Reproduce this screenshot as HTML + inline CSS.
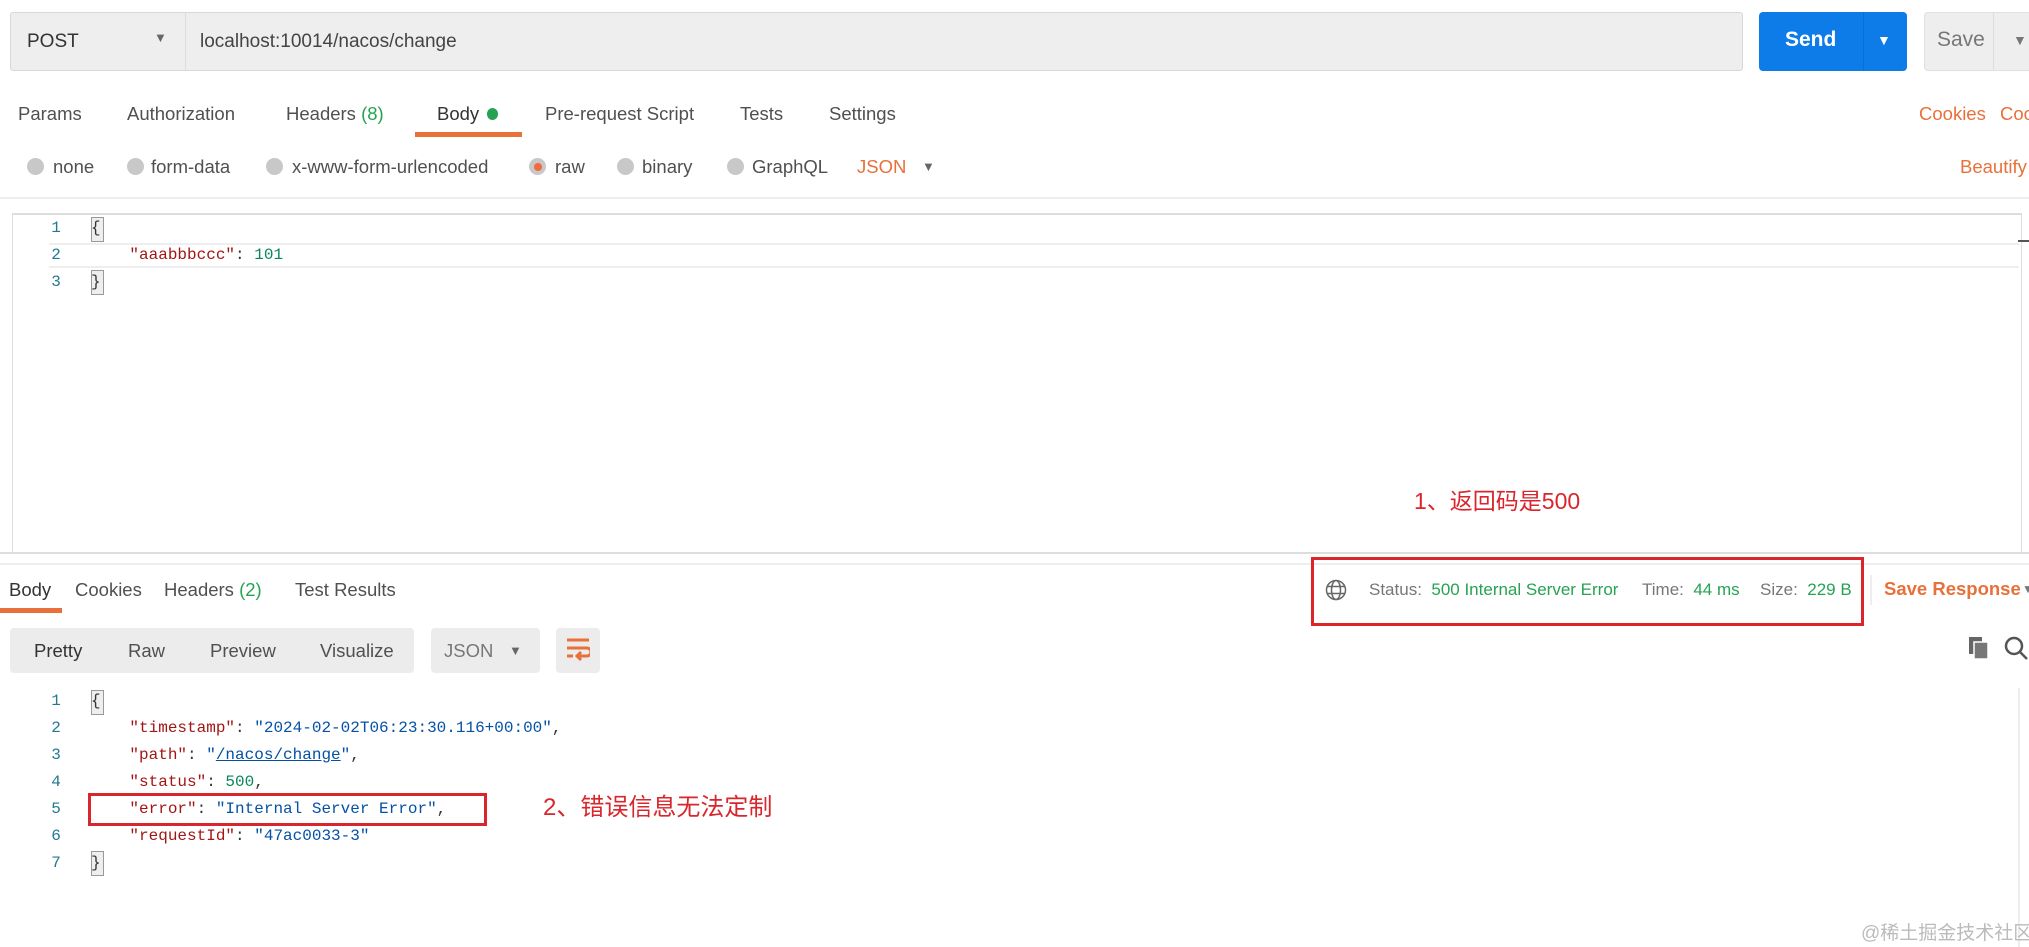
<!DOCTYPE html>
<html><head><meta charset="utf-8"><style>
*{margin:0;padding:0;box-sizing:border-box}
body{width:2029px;height:947px;background:#fff;position:relative;overflow:hidden;font-family:"Liberation Sans","Noto Sans CJK SC",sans-serif;color:#505050}
.a{position:absolute;white-space:nowrap}
.t{font-size:18.5px;line-height:24px;color:#505050}
.mono{font-family:"Liberation Mono",monospace;font-size:16px;line-height:27px}
.ln{color:#237893;width:20px;text-align:center}
.k{color:#a31515}.s{color:#0451a5}.n{color:#098658}.p{color:#333}
.rad{position:absolute;width:17px;height:17px;border-radius:50%;background:#c8c8c8}
.or{color:#e8703a}.gr{color:#26a352}
.bb{position:absolute;width:13px;height:25px;border:1px solid #999;background:#eee}
</style></head><body>
<div class="a" style="left:10px;top:12px;width:1733px;height:59px;background:#eee;border:1px solid #d8d8d8;border-radius:3px"></div>
<div class="a" style="left:185px;top:13px;width:1px;height:57px;background:#ddd"></div>
<div class="a" style="left:27px;top:30px;font-size:19px;line-height:24px;color:#333">POST</div>
<div class="a" style="left:154px;top:30px;font-size:13px;color:#666">▼</div>
<div class="a" style="left:200px;top:30px;font-size:19px;line-height:24px;color:#444">localhost:10014/nacos/change</div>
<div class="a" style="left:1759px;top:12px;width:148px;height:59px;background:#0d7ce8;border-radius:4px"></div>
<div class="a" style="left:1863px;top:12px;width:1px;height:59px;background:#0a6fd2"></div>
<div class="a" style="left:1785px;top:28px;font-size:21px;font-weight:bold;color:#fff">Send</div>
<div class="a" style="left:1877px;top:32px;font-size:14px;color:#fff">▼</div>
<div class="a" style="left:1924px;top:12px;width:110px;height:59px;background:#eee;border:1px solid #e0e0e0;border-radius:4px"></div>
<div class="a" style="left:1993px;top:13px;width:1px;height:57px;background:#ddd"></div>
<div class="a" style="left:1937px;top:28px;font-size:21px;color:#777">Save</div>
<div class="a" style="left:2013px;top:32px;font-size:14px;color:#777">▼</div>
<div class="a t" style="left:18px;top:102px">Params</div>
<div class="a t" style="left:127px;top:102px">Authorization</div>
<div class="a t" style="left:286px;top:102px">Headers <span class="gr">(8)</span></div>
<div class="a t" style="left:437px;top:102px;color:#333">Body</div>
<div class="a" style="left:487px;top:108px;width:11px;height:12px;border-radius:50%;background:#26a352"></div>
<div class="a" style="left:415px;top:132px;width:107px;height:5px;background:#e8703a"></div>
<div class="a t" style="left:545px;top:102px">Pre-request Script</div>
<div class="a t" style="left:740px;top:102px">Tests</div>
<div class="a t" style="left:829px;top:102px">Settings</div>
<div class="a t or" style="left:1919px;top:102px">Cookies</div>
<div class="a t or" style="left:2000px;top:102px">Cookies</div>
<div class="rad" style="left:27px;top:158px"></div><div class="a t" style="left:53px;top:155px">none</div>
<div class="rad" style="left:127px;top:158px"></div><div class="a t" style="left:151px;top:155px">form-data</div>
<div class="rad" style="left:266px;top:158px"></div><div class="a t" style="left:292px;top:155px">x-www-form-urlencoded</div>
<div class="rad" style="left:529px;top:158px"></div><div class="a" style="left:534px;top:163px;width:8px;height:8px;border-radius:50%;background:#f26b3a"></div><div class="a t" style="left:555px;top:155px">raw</div>
<div class="rad" style="left:617px;top:158px"></div><div class="a t" style="left:642px;top:155px">binary</div>
<div class="rad" style="left:727px;top:158px"></div><div class="a t" style="left:752px;top:155px">GraphQL</div>
<div class="a t or" style="left:857px;top:155px">JSON</div>
<div class="a" style="left:922px;top:159px;font-size:13px;color:#666">▼</div>
<div class="a t or" style="left:1960px;top:155px">Beautify</div>
<div class="a" style="left:0;top:197px;width:2029px;height:2px;background:#eee"></div>
<div class="a" style="left:12px;top:213px;width:2010px;height:340px;border-top:2px solid #ddd;border-left:1px solid #ddd;border-right:1px solid #ddd"></div>
<div class="a" style="left:49px;top:243px;width:1970px;height:25px;border-top:2px solid #eee;border-bottom:2px solid #eee"></div>
<div class="bb" style="left:91px;top:217px"></div>
<div class="bb" style="left:91px;top:270px"></div>
<div class="a" style="left:2018px;top:240px;width:11px;height:2px;background:#555"></div>
<div class="a mono" style="left:46px;top:215px">
<div class="ln">1</div><div class="ln">2</div><div class="ln">3</div></div>
<div class="a mono p" style="left:91px;top:215px">{<br>&nbsp;&nbsp;&nbsp;&nbsp;<span class="k">"aaabbbccc"</span>: <span class="n">101</span><br>}</div>
<div class="a" style="left:1414px;top:482px;font-size:23px;color:#d9262c">1、返回码是500</div>
<div class="a" style="left:0;top:552px;width:2029px;height:2px;background:#ddd"></div>
<div class="a" style="left:0;top:563px;width:2029px;height:2px;background:#eee"></div>
<div class="a t" style="left:9px;top:578px;color:#333">Body</div>
<div class="a t" style="left:75px;top:578px">Cookies</div>
<div class="a t" style="left:164px;top:578px">Headers <span class="gr">(2)</span></div>
<div class="a t" style="left:295px;top:578px">Test Results</div>
<div class="a" style="left:0;top:608px;width:62px;height:5px;background:#e8703a"></div>
<div class="a" style="left:1311px;top:557px;width:553px;height:69px;border:3px solid #d9262c"></div>
<svg class="a" style="left:1325px;top:579px" width="22" height="22" viewBox="0 0 22 22" fill="none" stroke="#666" stroke-width="1.5"><circle cx="11" cy="11" r="9.5"/><ellipse cx="11" cy="11" rx="4.5" ry="9.5"/><path d="M2 7.5h18M2 14.5h18"/></svg>
<div class="a" style="left:1369px;top:579px;font-size:17px;line-height:22px"><span style="color:#777">Status:</span>&nbsp; <span class="gr">500 Internal Server Error</span></div>
<div class="a" style="left:1642px;top:579px;font-size:17px;line-height:22px"><span style="color:#777">Time:</span>&nbsp; <span class="gr">44 ms</span></div>
<div class="a" style="left:1760px;top:579px;font-size:17px;line-height:22px"><span style="color:#777">Size:</span>&nbsp; <span class="gr">229 B</span></div>
<div class="a" style="left:1870px;top:575px;width:2px;height:30px;background:#eee"></div>
<div class="a or" style="left:1884px;top:578px;font-size:18.5px;font-weight:bold">Save Response</div>
<div class="a" style="left:2022px;top:582px;font-size:12px;color:#777">▼</div>
<div class="a" style="left:10px;top:628px;width:404px;height:45px;background:#ececec;border-radius:4px"></div>
<div class="a t" style="left:34px;top:639px;color:#333">Pretty</div>
<div class="a t" style="left:128px;top:639px">Raw</div>
<div class="a t" style="left:210px;top:639px">Preview</div>
<div class="a t" style="left:320px;top:639px">Visualize</div>
<div class="a" style="left:431px;top:628px;width:109px;height:45px;background:#ececec;border-radius:4px"></div>
<div class="a t" style="left:444px;top:639px;color:#777">JSON</div>
<div class="a" style="left:509px;top:643px;font-size:13px;color:#666">▼</div>
<div class="a" style="left:556px;top:628px;width:44px;height:45px;background:#ececec;border-radius:4px"></div>
<svg class="a" style="left:566px;top:637px" width="24" height="26" viewBox="0 0 24 26" fill="none" stroke="#e8703a" stroke-width="3"><path d="M1 3h22M1 11h20a4 4 0 0 1 0 8h-8M15 15l-4 4 4 4M1 19h6"/></svg>
<svg class="a" style="left:1968px;top:636px" width="22" height="24" viewBox="0 0 22 24"><rect x="1" y="1" width="13" height="17" fill="#666"/><rect x="6" y="6" width="14" height="17" fill="#777" stroke="#fff" stroke-width="1.5"/></svg>
<svg class="a" style="left:2004px;top:636px" width="25" height="25" viewBox="0 0 25 25" fill="none" stroke="#555" stroke-width="2.5"><circle cx="10" cy="10" r="8"/><path d="M16 16l7 7"/></svg>
<div class="bb" style="left:91px;top:690px"></div>
<div class="bb" style="left:91px;top:851px"></div>
<div class="a mono" style="left:46px;top:688px">
<div class="ln">1</div><div class="ln">2</div><div class="ln">3</div><div class="ln">4</div><div class="ln">5</div><div class="ln">6</div><div class="ln">7</div></div>
<div class="a mono p" style="left:91px;top:688px">{<br>
&nbsp;&nbsp;&nbsp;&nbsp;<span class="k">"timestamp"</span>: <span class="s">"2024-02-02T06:23:30.116+00:00"</span>,<br>
&nbsp;&nbsp;&nbsp;&nbsp;<span class="k">"path"</span>: <span class="s">"<u>/nacos/change</u>"</span>,<br>
&nbsp;&nbsp;&nbsp;&nbsp;<span class="k">"status"</span>: <span class="n">500</span>,<br>
&nbsp;&nbsp;&nbsp;&nbsp;<span class="k">"error"</span>: <span class="s">"Internal Server Error"</span>,<br>
&nbsp;&nbsp;&nbsp;&nbsp;<span class="k">"requestId"</span>: <span class="s">"47ac0033-3"</span><br>}</div>
<div class="a" style="left:88px;top:793px;width:399px;height:33px;border:3px solid #d9262c"></div>
<div class="a" style="left:543px;top:787px;font-size:24px;color:#d9262c">2、错误信息无法定制</div>
<div class="a" style="left:2018px;top:688px;width:2px;height:259px;background:#eee"></div>
<div class="a" style="left:1861px;top:918px;font-size:19px;color:#bbb">@稀土掘金技术社区</div>
</body></html>
